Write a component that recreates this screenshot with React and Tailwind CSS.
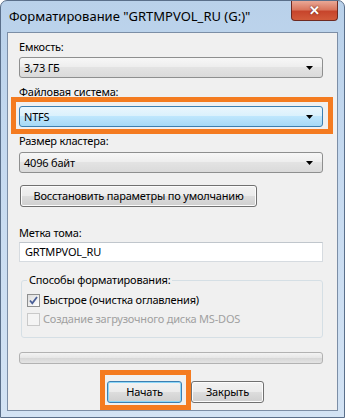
import React from 'react';

const Arrow = () => (
    <svg width="7" height="4" viewBox="0 0 7 4" className="absolute right-[9px] top-1/2 -translate-y-1/2">
        <path d="M0 0h7L3.5 4z" fill="#000" />
    </svg>
);

const Combo = ({ value, active }) => (
    <div
        className={`relative flex h-[21px] w-[304px] items-center rounded-[3px] border pl-[4px] ${
            active
                ? 'border-[#3c7fb1] bg-[linear-gradient(#eaf6fd_0%,#d9f0fc_50%,#bee6fd_50%,#a7d9f5_100%)]'
                : 'border-[#8e8f8f] bg-[linear-gradient(#f7f7f7_0%,#ededed_50%,#e3e3e3_50%,#dadada_100%)]'
        }`}
    >
        {value}
        <Arrow />
    </div>
);

const Button = ({ children, className = '', primary }) => (
    <div
        className={`flex h-[22px] items-center justify-center whitespace-nowrap rounded-[3px] border ${
            primary
                ? 'border-[#3c7fb1] bg-[linear-gradient(#f2f2f2_0%,#ebebeb_50%,#dddddd_50%,#cfcfcf_100%)] shadow-[inset_0_0_0_1px_#8cd6f8]'
                : 'border-[#707070] bg-[linear-gradient(#f2f2f2_0%,#ebebeb_50%,#dddddd_50%,#cfcfcf_100%)] shadow-[inset_0_0_0_1px_#fcfcfc]'
        } ${className}`}
    >
        {children}
    </div>
);

const Checkbox = ({ checked, disabled, label }) => (
    <div className={`flex items-center gap-[3px] ${disabled ? 'text-[#a0a0a0]' : 'text-black'}`}>
        <div
            className={`flex h-[13px] w-[13px] items-center justify-center border ${
                disabled
                    ? 'border-[#c9c9c9] bg-[#f4f4f4]'
                    : 'border-[#8e8f8f] bg-[linear-gradient(135deg,#dcdcdc,#ffffff)]'
            }`}
        >
            {checked && (
                <svg width="9" height="9" viewBox="0 0 9 9">
                    <path d="M1 4.5l2.3 2.8L8 1" fill="none" stroke="#4a5f97" strokeWidth="1.8" />
                </svg>
            )}
        </div>
        <span>{label}</span>
    </div>
);

const App = () => {
    return (
        <div className="relative h-[418px] w-[345px] overflow-hidden rounded-t-[7px] border border-[#5a6f8a] bg-[linear-gradient(180deg,#b9d1ea_0%,#c6daf0_40%,#d3e3f4_100%)] font-['Noto_Sans',sans-serif] text-[11px] leading-[16px] tracking-[-0.2px] text-black">
            {/* title bar */}
            <div className="flex h-[31px] items-start">
                <div className="mt-[7px] pl-[8px] text-[13px] leading-[16px] tracking-normal">Форматирование "GRTMPVOL_RU (G:)"</div>
                <div className="ml-auto mr-[6px] flex h-[20px] w-[47px] items-center justify-center rounded-b-[4px] border border-t-0 border-[#6d2a22] bg-[linear-gradient(#e9a896_0%,#d9775f_45%,#c7452c_55%,#d25a3a_100%)]">
                    <span className="text-[13px] font-bold leading-none text-white [text-shadow:0_0_2px_#5a1a10]">✕</span>
                </div>
            </div>

            {/* client area */}
            <div className="mx-[6px] h-[379px] border border-[#7c8ea6] bg-[#f0f0f0] pl-[11px] pt-[6px]">
                <div>Емкость:</div>
                <div className="mt-[2px]">
                    <Combo value="3,73 ГБ" />
                </div>

                <div className="mt-[6px]">Файловая система:</div>
                <div className="mt-[6px]">
                    <Combo value="NTFS" active />
                </div>

                <div className="mt-[6px]">Размер кластера:</div>
                <div className="mt-[3px]">
                    <Combo value="4096 байт" />
                </div>

                <Button className="ml-[1px] mt-[12px] w-[237px]">Восстановить параметры по умолчанию</Button>

                <div className="mt-[18px]">Метка тома:</div>
                <div className="mt-[1px] flex h-[20px] w-[304px] items-center border border-[#d6dbe0] border-t-[#c0c6cc] bg-white pl-[5px]">
                    GRTMPVOL_RU
                </div>

                <fieldset className="ml-[2px] mt-[10px] h-[66px] w-[302px] rounded-[3px] border border-[#d5dfe5] px-[5px] pt-[4px]">
                    <legend className="px-[2px]">Способы форматирования:</legend>
                    <div className="flex flex-col gap-[3px]">
                        <Checkbox checked label="Быстрое (очистка оглавления)" />
                        <Checkbox disabled label="Создание загрузочного диска MS-DOS" />
                    </div>
                </fieldset>

                <div className="mt-[14px] h-[12px] w-[304px] rounded-[3px] border border-[#b2b2b2] bg-[linear-gradient(#f3f3f3_0%,#e6e6e6_50%,#d6d6d6_51%,#e4e4e4_100%)]" />

                <div className="mt-[17px] flex gap-[9px] pl-[88px]">
                    <Button primary className="w-[75px]">Начать</Button>
                    <Button className="w-[73px]">Закрыть</Button>
                </div>
            </div>

            {/* orange highlights */}
            <div className="pointer-events-none absolute left-[10px] top-[96px] h-[37px] w-[322px] border-[5px] border-[#f47b20]" />
            <div className="pointer-events-none absolute left-[99px] top-[369px] h-[40px] w-[91px] border-[5px] border-[#f47b20]" />
        </div>
    );
};

export default App;
